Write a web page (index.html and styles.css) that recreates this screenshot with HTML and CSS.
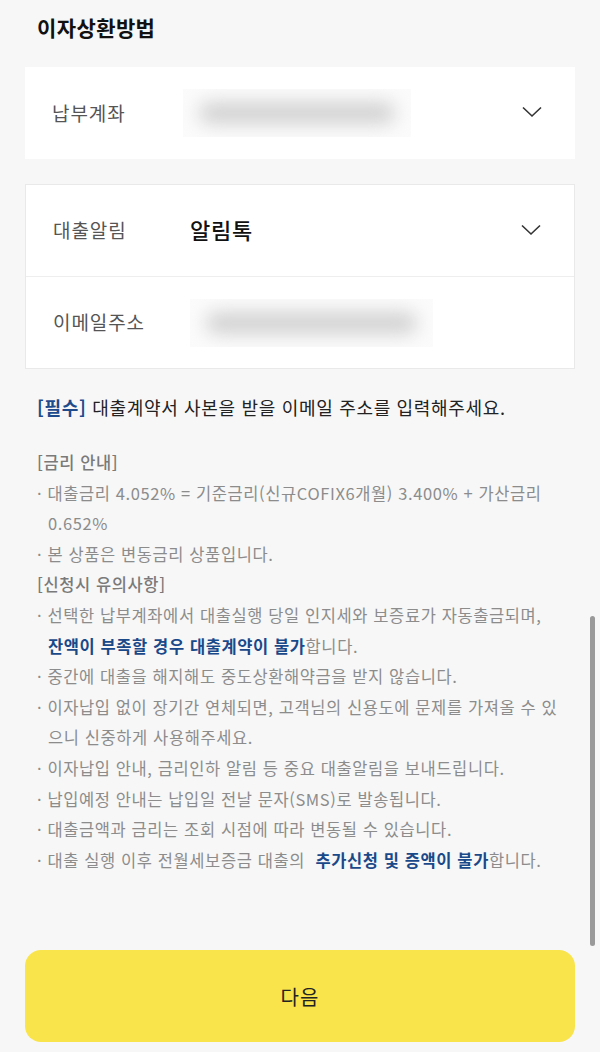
FILE: index.html
```html
<!DOCTYPE html>
<html lang="ko">
<head>
<meta charset="utf-8">
<link rel="stylesheet" href="styles.css">
</head>
<body>
<div class="page">
  <h1 class="title">이자상환방법</h1>

  <div class="card card-plain">
    <div class="row">
      <span class="label">납부계좌</span>
      <div class="blur blur-account"><span class="blob"></span></div>
      <svg class="chev" width="20" height="12" viewBox="0 0 20 12"><path d="M1 1.5 L10 10 L19 1.5" fill="none" stroke="#333" stroke-width="1.6"/></svg>
    </div>
  </div>

  <div class="card card-border">
    <div class="row">
      <span class="label">대출알림</span>
      <span class="value">알림톡</span>
      <svg class="chev" width="20" height="12" viewBox="0 0 20 12"><path d="M1 1.5 L10 10 L19 1.5" fill="none" stroke="#333" stroke-width="1.6"/></svg>
    </div>
    <div class="divider"></div>
    <div class="row">
      <span class="label">이메일주소</span>
      <div class="blur blur-email"><span class="blob"></span></div>
    </div>
  </div>

  <p class="notice"><span class="req">[필수]</span> 대출계약서 사본을 받을 이메일 주소를 입력해주세요.</p>

  <div class="info">
    <p class="head">[금리 안내]</p>
    <p class="item">· 대출금리 4.052% = 기준금리(신규COFIX6개월) 3.400% + 가산금리 0.652%</p>
    <p class="item">· 본 상품은 변동금리 상품입니다.</p>
    <p class="head">[신청시 유의사항]</p>
    <p class="item">· 선택한 납부계좌에서 대출실행 당일 인지세와 보증료가 자동출금되며, <b class="em">잔액이 부족할 경우 대출계약이 불가</b>합니다.</p>
    <p class="item">· 중간에 대출을 해지해도 중도상환해약금을 받지 않습니다.</p>
    <p class="item">· 이자납입 없이 장기간 연체되면, 고객님의 신용도에 문제를 가져올 수 있으니 신중하게 사용해주세요.</p>
    <p class="item">· 이자납입 안내, 금리인하 알림 등 중요 대출알림을 보내드립니다.</p>
    <p class="item">· 납입예정 안내는 납입일 전날 문자(SMS)로 발송됩니다.</p>
    <p class="item">· 대출금액과 금리는 조회 시점에 따라 변동될 수 있습니다.</p>
    <p class="item">· 대출 실행 이후 전월세보증금 대출의 &nbsp;<b class="em">추가신청 및 증액이 불가</b>합니다.</p>
  </div>

  <button class="next">다음</button>
</div>
<div class="scrollbar"></div>
</body>
</html>
```

FILE: styles.css
```css
html, body {
  margin: 0;
  padding: 0;
  background: #f7f7f7;
}
body {
  font-family: "Noto Sans CJK KR", "Noto Sans", sans-serif;
  width: 600px;
  height: 1052px;
  overflow: hidden;
  position: relative;
}
.page {
  padding: 0 25px;
}
.title {
  margin: 0;
  padding: 13px 0 0 12px;
  font-size: 21px;
  line-height: 28px;
  font-weight: 700;
  color: #111;
  letter-spacing: 0.4px;
}
.card {
  background: #fff;
  box-sizing: border-box;
}
.card-plain {
  margin-top: 26px;
  height: 92px;
}
.card-border {
  margin-top: 25px;
  border: 1px solid #e9e9e9;
}
.row {
  height: 91px;
  display: flex;
  align-items: center;
  padding-left: 27px;
  position: relative;
}
.card-plain .row {
  height: 92px;
}
.divider {
  height: 1px;
  background: #eeeeee;
}
.label {
  width: 137px;
  flex: none;
  font-size: 19px;
  color: #555;
  letter-spacing: 0.9px;
  margin-top: -2px;
}
.value {
  font-size: 22px;
  color: #111;
  font-weight: 500;
  letter-spacing: 0.8px;
  margin-top: -3px;
}
.chev {
  position: absolute;
  right: 33px;
  top: 39px;
}
.blur {
  position: relative;
  height: 48px;
  background: #fbfbfb;
  overflow: hidden;
}
.blur-account {
  width: 228px;
  margin-left: -6px;
}
.blur-email {
  width: 243px;
  margin-left: 0;
}
.blob {
  position: absolute;
  left: 16px;
  right: 16px;
  top: 13px;
  bottom: 13px;
  border-radius: 12px;
  background: #d2d2d2;
  filter: blur(9px);
}
.notice {
  margin: 24px 0 0 12px;
  font-size: 18px;
  line-height: 28px;
  color: #222;
  letter-spacing: 0.68px;
}
.req {
  color: #1d4b8c;
  font-weight: 700;
}
.info {
  margin: 26px 0 0 12px;
  width: 524px;
}
.info p {
  margin: 0;
  font-size: 16.5px;
  line-height: 30.6px;
  letter-spacing: 0.6px;
}
.head {
  color: #7a7a7a;
  font-weight: 500;
}
.item {
  color: #8c8c8c;
  padding-left: 11px;
  text-indent: -11px;
}
.em {
  color: #1a4989;
  font-weight: 700;
}
.next {
  display: block;
  width: 550px;
  height: 92px;
  margin-top: 75px;
  border: none;
  border-radius: 16px;
  background: #f9e44b;
  font-family: inherit;
  font-size: 20px;
  letter-spacing: 1px;
  color: #222;
  padding: 0;
}
.scrollbar {
  position: absolute;
  left: 590px;
  top: 616px;
  width: 5px;
  height: 330px;
  border-radius: 3px;
  background: #9a9a9a;
}
```
